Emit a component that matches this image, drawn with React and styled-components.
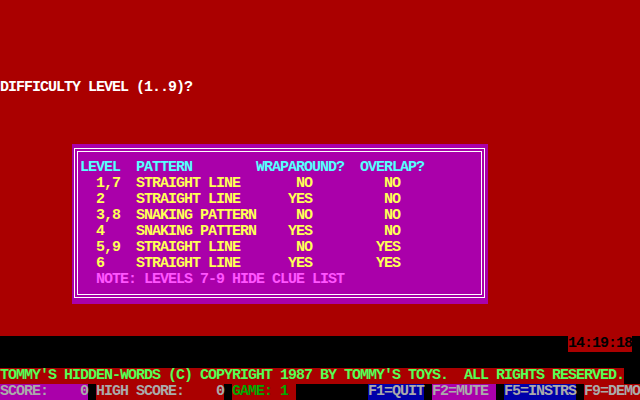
import React from "react";
import styled, { createGlobalStyle } from "styled-components";

const C = {
  red: "#AA0000",
  purple: "#AA00AA",
  blue: "#0000AA",
  black: "#000000",
  gray: "#AAAAAA",
  white: "#FFFFFF",
  cyan: "#55FFFF",
  yellow: "#FFFF55",
  pink: "#FF55FF",
  lime: "#55FF55",
  green: "#00AA00",
};

const Global = createGlobalStyle`
  html, body { margin: 0; padding: 0; background: #000; }
  #root { width: 640px; height: 400px; }
`;

const Screen = styled.div`
  width: 640px;
  height: 400px;
  display: flex;
  flex-direction: column;
  background: ${C.black};
  font-family: "Liberation Mono", "DejaVu Sans Mono", monospace;
  font-weight: bold;
  font-size: 15px;
  letter-spacing: -1px;
  line-height: 16px;
  overflow: hidden;
`;

const Desk = styled.div`
  height: 336px;
  background: ${C.red};
  display: flex;
  flex-direction: column;
`;

const Blank = styled.div`
  height: ${(p) => p.$rows * 16}px;
  flex: none;
`;

const Line = styled.div`
  height: 16px;
  display: flex;
  flex: none;
  justify-content: ${(p) => (p.$end ? "flex-end" : "flex-start")};
  padding-right: ${(p) => (p.$end ? 8 : 0)}px;
`;

const Seg = styled.span`
  display: block;
  flex: none;
  width: ${(p) => p.$cols * 8}px;
  height: 16px;
  white-space: pre;
  color: ${(p) => p.$fg || C.gray};
  background: ${(p) => p.$bg || "transparent"};
`;

const Panel = styled.div`
  flex: none;
  margin-left: 72px;
  width: 416px;
  height: 160px;
  box-sizing: border-box;
  padding: 4px 3px 6px 2px;
  background: ${C.purple};
  display: flex;
`;

const Frame = styled.div`
  flex: 1;
  border: 1px solid ${C.white};
  padding: 2px;
  display: flex;
`;

const Inner = styled.div`
  flex: 1;
  border: 1px solid ${C.white};
  padding: 8px 0 0 2px;
  display: flex;
  flex-direction: column;
`;

function build(parts, base = 10) {
  let s = "";
  parts.forEach(([col, text]) => {
    s = s.padEnd(col - base, " ") + text;
  });
  return s;
}

const rows = [
  ["1,7", "STRAIGHT LINE", "NO", "NO"],
  ["2", "STRAIGHT LINE", "YES", "NO"],
  ["3,8", "SNAKING PATTERN", "NO", "NO"],
  ["4", "SNAKING PATTERN", "YES", "NO"],
  ["5,9", "STRAIGHT LINE", "NO", "YES"],
  ["6", "STRAIGHT LINE", "YES", "YES"],
];

function T({ text, fg, bg }) {
  return (
    <Seg $cols={text.length} $fg={fg} $bg={bg}>
      {text}
    </Seg>
  );
}

export default function App() {
  const header = build([
    [10, "LEVEL"],
    [17, "PATTERN"],
    [32, "WRAPAROUND?"],
    [45, "OVERLAP?"],
  ]);
  return (
    <>
      <Global />
      <Screen>
        <Desk>
          <Blank $rows={5} />
          <Line>
            <T text="DIFFICULTY LEVEL (1..9)?" fg={C.white} />
          </Line>
          <Blank $rows={3} />
          <Panel>
            <Frame>
              <Inner>
                <Line>
                  <T text={header} fg={C.cyan} />
                </Line>
                {rows.map(([lv, pat, wrap, ov]) => (
                  <Line key={lv}>
                    <T
                      fg={C.yellow}
                      text={build([
                        [12, lv],
                        [17, pat],
                        [wrap === "YES" ? 36 : 37, wrap],
                        [ov === "YES" ? 47 : 48, ov],
                      ])}
                    />
                  </Line>
                ))}
                <Line>
                  <T
                    fg={C.pink}
                    text={build([[12, "NOTE: LEVELS 7-9 HIDE CLUE LIST"]])}
                  />
                </Line>
              </Inner>
            </Frame>
          </Panel>
          <Blank $rows={2} />
        </Desk>
        <Line $end>
          <T text="14:19:18" fg={C.black} bg={C.red} />
        </Line>
        <Blank $rows={1} />
        <Line>
          <T
            text="TOMMY'S HIDDEN-WORDS (C) COPYRIGHT 1987 BY TOMMY'S TOYS.  ALL RIGHTS RESERVED."
            fg={C.lime}
            bg={C.red}
          />
        </Line>
        <Line>
          <T text="SCORE:    0" bg={C.purple} />
          <T text=" " />
          <T text="HIGH SCORE:    0" bg={C.red} />
          <T text=" " />
          <T text="GAME: 1 " fg={C.green} bg={C.red} />
          <T text="         " />
          <T text="F1=QUIT" bg={C.blue} />
          <T text=" " />
          <T text="F2=MUTE " bg={C.purple} />
          <T text=" " />
          <T text="F5=INSTRS" bg={C.blue} />
          <T text=" " />
          <T text="F9=DEMO" bg={C.red} />
        </Line>
      </Screen>
    </>
  );
}
